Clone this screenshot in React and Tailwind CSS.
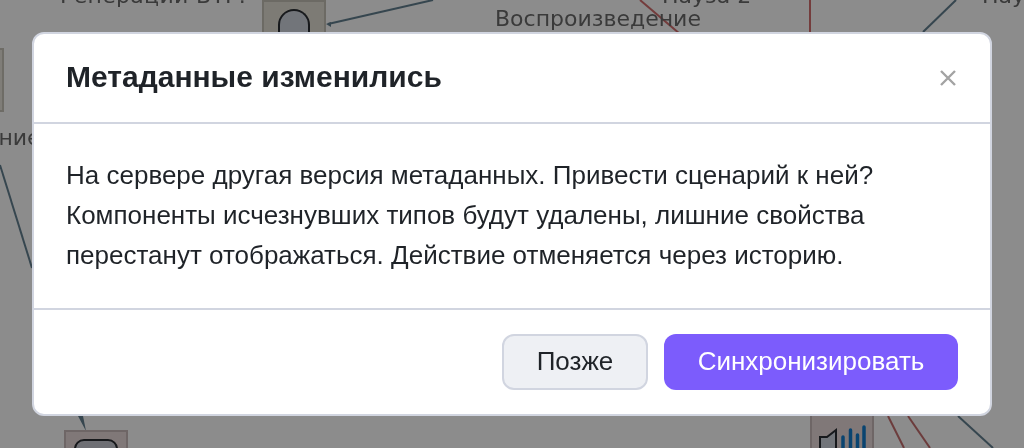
const labelClass = "absolute whitespace-nowrap font-['DejaVu_Sans',sans-serif] text-[22px] leading-[26px] text-[#3a3a3a] will-change-transform";

export default function App() {
  return (
    <div className="relative h-[448px] w-[1024px] overflow-hidden bg-[#8c8c8c] font-['Liberation_Sans',sans-serif]">
      {/* Canvas behind the dialog: the diagram's edges, nodes and labels */}
      <svg className="absolute left-0 top-0" width="1024" height="448" viewBox="0 0 1024 448" fill="none">
        <path d="M328 24 L433 0" stroke="#36464f" strokeWidth="2" />
        <path d="M326 24 L331 22 L331 27 Z" fill="#36464f" />
        <path d="M640 0 L680 34" stroke="#743c3c" strokeWidth="2" />
        <path d="M810 0 L810 34" stroke="#743c3c" strokeWidth="2" />
        <path d="M923 32 L956 0" stroke="#36464f" strokeWidth="2" />
        <path d="M0 165 L32 268" stroke="#36464f" strokeWidth="2" />
        <path d="M78 416 L86 431 L83 416 Z" fill="#36464f" />
        <path d="M888 416 L904 448" stroke="#6c3c3c" strokeWidth="2" />
        <path d="M908 416 L930 448" stroke="#6c3c3c" strokeWidth="2" />
        <path d="M958 416 L993 448" stroke="#36464f" strokeWidth="2" />
      </svg>

      <div className="absolute left-[-60px] top-[48px] h-[64px] w-[64px] border-2 border-[#6e6c66] bg-[#7f7d78]" />

      <div className="absolute left-[262px] top-0 flex h-[40px] w-[64px] justify-center border-x-2 border-t-2 border-[#6c6a64] bg-[#7d7b75] pt-[7px]">
        <div className="h-[40px] w-[32px] rounded-t-[16px] border-x-[2px] border-t-[2px] border-[#17191c] bg-[#72757a]" />
      </div>

      <div className="absolute left-[64px] top-[430px] flex h-[40px] w-[64px] justify-center border-2 border-[#6e6666] bg-[#807878] pt-[7px]">
        <div className="h-[40px] w-[44px] rounded-[10px] border-2 border-[#17191c] bg-[#6e6f74]" />
      </div>

      <div className="absolute left-[810px] top-[412px] h-[50px] w-[64px] border-2 border-[#6e6666] bg-[#807878]">
        <svg className="absolute left-0 top-0" width="60" height="46" viewBox="0 0 60 46" fill="none">
          <path d="M8 23 H15 L24 16 V44 H8 Z" fill="#72757a" stroke="#17191c" strokeWidth="2" />
          <path d="M31 23 V46 M38.5 16 V46 M45.5 21 V46 M52 13 V46" stroke="#0a4470" strokeWidth="3.5" strokeLinecap="round" />
        </svg>
      </div>

      <div className={`${labelClass} left-[60px] top-[-17px] tracking-[0.3px]`}>Генерации ВТГ.</div>
      <div className={`${labelClass} left-[495px] top-[6px]`}>Воспроизведение</div>
      <div className={`${labelClass} left-[662px] top-[-17px]`}>Пауза 2</div>
      <div className={`${labelClass} left-[982px] top-[-17px]`}>Пауза</div>
      <div className={`${labelClass} left-[-43px] top-[125px]`}>Чтение</div>

      {/* Dialog */}
      <div className="relative flex h-full items-center justify-center">
        <div className="w-[960px] rounded-[12px] border-2 border-[#d1d5e0] bg-white will-change-transform">
          <div className="flex h-[90px] items-center justify-between border-b-2 border-[#d1d5e0] px-[32px]">
            <h2 className="mb-[4px] text-[30px] font-bold text-[#1f2328]">Метаданные изменились</h2>
            <svg className="mr-[1px]" width="18" height="18" viewBox="0 0 18 18" fill="none" stroke="#a3a3a3" strokeWidth="2.4">
              <path d="M2 2 L16 16 M16 2 L2 16" />
            </svg>
          </div>
          <div className="border-b-2 border-[#d1d5e0] px-[32px] pb-[33px] pt-[31px] text-[26px] leading-[40px] text-[#1f2328]">
            <p>На сервере другая версия метаданных. Привести сценарий к ней?</p>
            <p>Компоненты исчезнувших типов будут удалены, лишние свойства</p>
            <p>перестанут отображаться. Действие отменяется через историю.</p>
          </div>
          <div className="flex justify-end gap-[16px] px-[32px] py-[24px]">
            <button className="h-[56px] w-[146px] rounded-[12px] border-2 border-[#d1d5e0] bg-[#eef0f4] pb-[2px] text-[26px] text-[#1f2328]">Позже</button>
            <button className="h-[56px] w-[294px] rounded-[12px] bg-[#7c5cfc] pb-[2px] text-[26px] text-white">Синхронизировать</button>
          </div>
        </div>
      </div>
    </div>
  );
}
